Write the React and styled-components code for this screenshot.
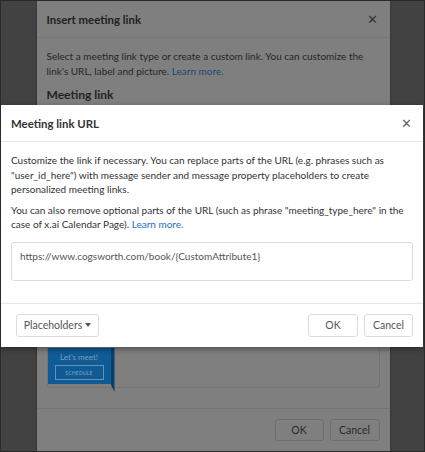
import React from 'react'
import styled, { createGlobalStyle } from 'styled-components'

const GlobalStyle = createGlobalStyle`
    body {
        margin: 0;
        font-family: Lato, "Open Sans", sans-serif;
    }
`

const Page = styled.div`
    position: relative;
    width: 425px;
    height: 452px;
    box-sizing: border-box;
    border: 1px solid #2a2a2a;
    background: #424242;
    overflow: hidden;
    display: flex;
    justify-content: center;
`

const BackDialog = styled.div`
    width: 353px;
    margin-left: 1px;
    background: #7f7f7f;
    display: flex;
    flex-direction: column;
    color: #1e1e1e;
    box-shadow: 0 0 2px rgba(0, 0, 0, 0.4);
`

const BackHeader = styled.div`
    height: 36px;
    display: flex;
    align-items: center;
    justify-content: space-between;
    padding: 0 12px 0 10px;
    border-bottom: 1px solid #767676;
`

const Title = styled.div`
    font-size: ${p => p.$size || 11.4}px;
    font-weight: 700;
    color: ${p => p.$dim ? '#222' : '#333'};
    margin-top: ${p => p.$gap || 0}px;
`

const Close = styled.span`
    font-size: 13px;
    line-height: 1;
    color: ${p => p.$dim ? '#333' : '#666'};
`

const BackBody = styled.div`
    flex: 1;
    display: flex;
    flex-direction: column;
    padding: 11px 10px 20px;
`

const Text = styled.p`
    margin: 0 ${p => p.$dim ? -20 : 0}px 6px 0;
    font-size: 10px;
    line-height: 14.6px;
    color: ${p => p.$dim ? '#262626' : '#333'};
`

const Link = styled.a`
    color: ${p => p.$dim ? '#1b4878' : '#1a6fc4'};
    text-decoration: none;
`

const Preview = styled.div`
    margin-top: auto;
    height: 90px;
    border: 1px solid #747474;
    border-radius: 3px;
    display: flex;
    align-items: flex-end;
`

const Banner = styled.div`
    position: relative;
    width: 63px;
    height: 36px;
    margin-bottom: 3px;
    background: #0e5b96;
    display: flex;
    flex-direction: column;
    align-items: center;
    padding-top: 4px;
    box-sizing: border-box;
    gap: 3px;
`

const Fold = styled.div`
    position: absolute;
    right: -4px;
    top: 0;
    width: 4px;
    height: 44px;
    background: #0a3f6a;
    clip-path: polygon(0 0, 100% 0, 100% 100%, 0 82%);
`

const BannerText = styled.div`
    font-size: 8px;
    color: #7e9cb8;
`

const BannerButton = styled.div`
    width: 47px;
    height: 13px;
    border: 1px solid #6f8fae;
    font-size: 5px;
    letter-spacing: 0.2px;
    color: #8aa6c0;
    display: flex;
    align-items: center;
    justify-content: center;
`

const Footer = styled.div`
    display: flex;
    align-items: center;
    justify-content: ${p => p.$split ? 'space-between' : 'flex-end'};
    gap: 6px;
    padding: ${p => p.$split ? '10px 10px 10px 15px' : '10px 10px 10px'};
    border-top: 1px solid ${p => p.$dim ? '#747474' : '#e6e6e6'};
`

const Group = styled.div`
    display: flex;
    gap: 6px;
`

const Button = styled.button`
    height: ${p => p.$dim ? 22 : 23}px;
    width: ${p => p.$w || 49}px;
    padding: 0;
    font-family: inherit;
    font-size: 10.5px;
    color: ${p => p.$dim ? '#2a2a2a' : '#555'};
    background: transparent;
    border: 1px solid ${p => p.$dim ? '#6e6e6e' : '#dcdcdc'};
    border-radius: 3px;
    display: flex;
    align-items: center;
    justify-content: center;
    gap: 3px;
`

const Caret = styled.span`
    width: 0;
    height: 0;
    border-left: 3px solid transparent;
    border-right: 3px solid transparent;
    border-top: 4px solid #555;
`

const Modal = styled.div`
    position: absolute;
    top: 104px;
    left: 0;
    right: 1px;
    background: #fff;
    box-shadow: 0 2px 6px rgba(0, 0, 0, 0.4);
`

const ModalHeader = styled.div`
    height: 36px;
    display: flex;
    align-items: center;
    justify-content: space-between;
    padding: 0 11px 0 10px;
    border-bottom: 1px solid #e6e6e6;
`

const ModalBody = styled.div`
    padding: 11px 10px 22px;
`

const UrlBox = styled.div`
    margin-top: 10px;
    height: 39px;
    border: 1px solid #dcdcdc;
    border-radius: 3px;
    padding: 7px 8px;
    box-sizing: border-box;
    font-size: 10px;
    color: #555;
`

export default function App() {
    return (
        <>
            <GlobalStyle />
            <Page>
                <BackDialog>
                    <BackHeader>
                        <Title $dim>Insert meeting link</Title>
                        <Close $dim>✕</Close>
                    </BackHeader>
                    <BackBody>
                        <Text $dim>
                            Select a meeting link type or create a custom link. You can customize the<br />
                            link's URL, label and picture. <Link $dim>Learn more.</Link>
                        </Text>
                        <Title $dim $size={12} $gap={3}>Meeting link</Title>
                        <Preview>
                            <Banner>
                                <BannerText>Let's meet!</BannerText>
                                <BannerButton>SCHEDULE</BannerButton>
                                <Fold />
                            </Banner>
                        </Preview>
                    </BackBody>
                    <Footer $dim>
                        <Button $dim>OK</Button>
                        <Button $dim $w={50}>Cancel</Button>
                    </Footer>
                </BackDialog>

                <Modal>
                    <ModalHeader>
                        <Title>Meeting link URL</Title>
                        <Close>✕</Close>
                    </ModalHeader>
                    <ModalBody>
                        <Text>
                            Customize the link if necessary. You can replace parts of the URL (e.g. phrases such as "user_id_here") with message sender and message property placeholders to create personalized meeting links.
                        </Text>
                        <Text>
                            You can also remove optional parts of the URL (such as phrase "meeting_type_here" in the case of x.ai Calendar Page). <Link>Learn more.</Link>
                        </Text>
                        <UrlBox>https://www.cogsworth.com/book/{'{CustomAttribute1}'}</UrlBox>
                    </ModalBody>
                    <Footer $split>
                        <Button $w={83}>Placeholders <Caret /></Button>
                        <Group>
                            <Button $w={50}>OK</Button>
                            <Button $w={49}>Cancel</Button>
                        </Group>
                    </Footer>
                </Modal>
            </Page>
        </>
    )
}
